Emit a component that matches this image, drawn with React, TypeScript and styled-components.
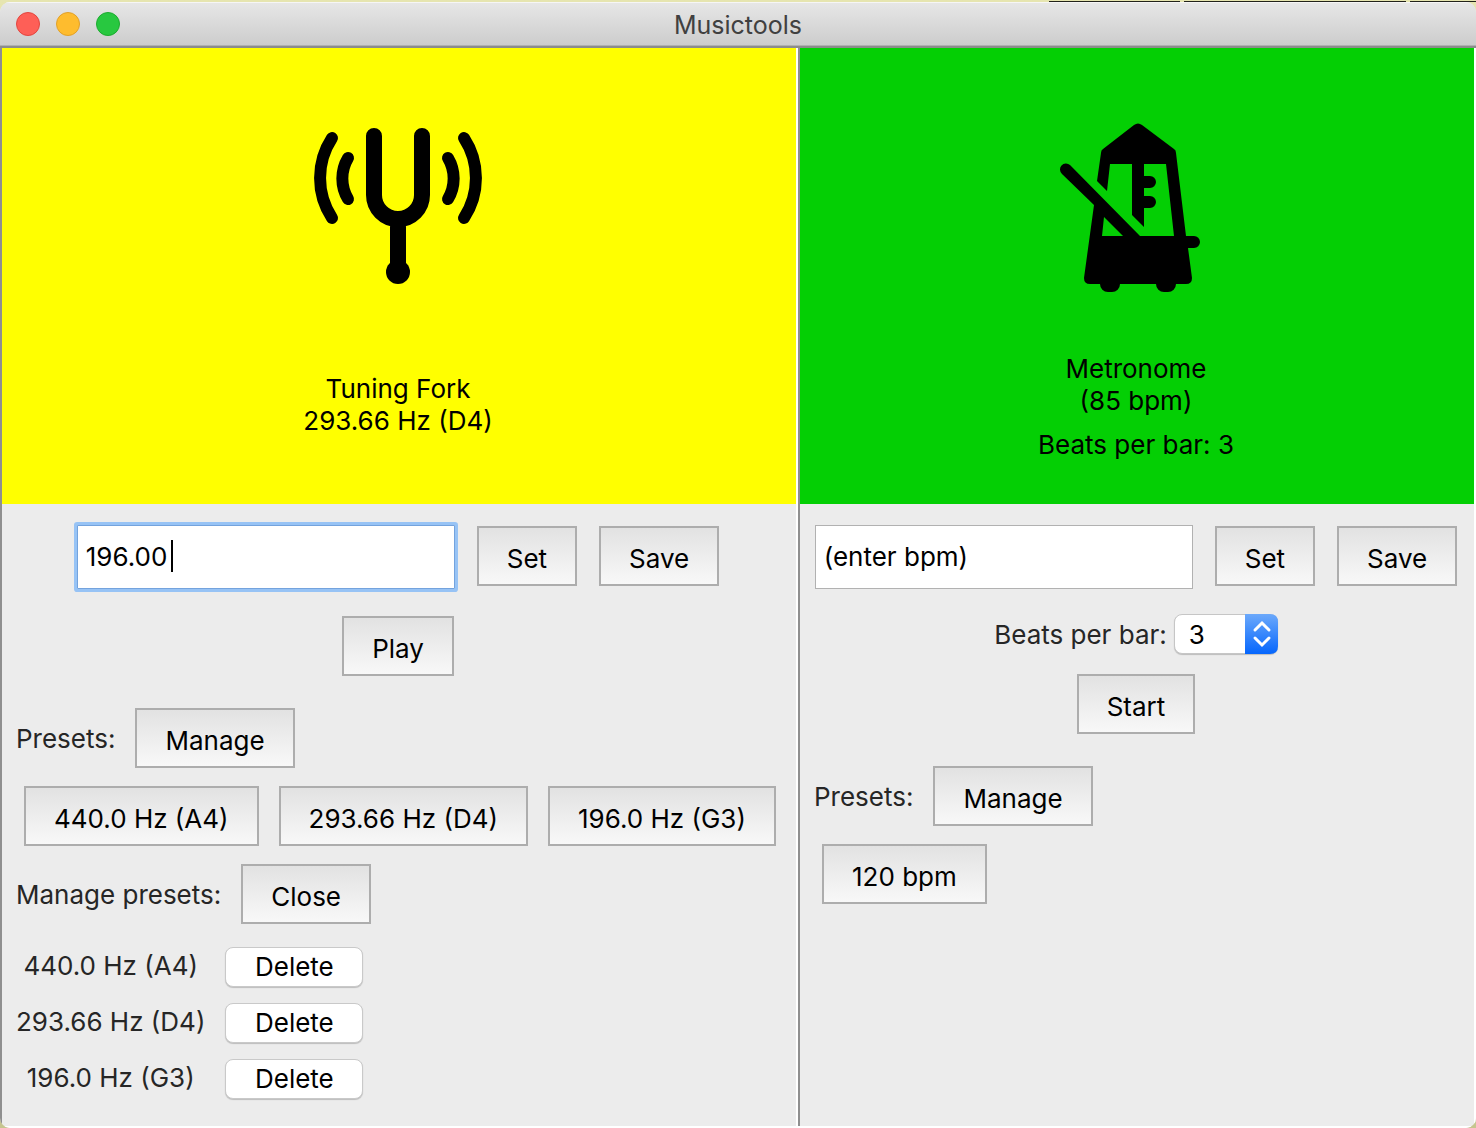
import React, { useState } from "react";
import styled, { createGlobalStyle } from "styled-components";

const GlobalStyle = createGlobalStyle`
  *, *::before, *::after { box-sizing: border-box; }
  body {
    margin: 0;
    background: linear-gradient(#e6e5b0, #c6c58f);
    color: #262626;
    font-family: Inter, "Liberation Sans", sans-serif;
    font-size: 26px;
    line-height: 32px;
  }
  button, input, select { font: inherit; color: #000; margin: 0; }
`;

const Desktop = styled.div`
  display: flex;
  flex-direction: column;
  min-height: 100vh;
`;

const DesktopEdge = styled.div`
  display: grid;
  grid-template-columns: 1044fr 131fr 222fr 66fr;
  column-gap: 4px;
  height: 2px;
  padding-top: 1px;
`;

const EdgeLine = styled.span<{ $dark?: boolean }>`
  background: ${(p) => (p.$dark ? "#22221a" : "transparent")};
`;

const AppWindow = styled.div`
  flex: 1;
  display: flex;
  flex-direction: column;
  border-radius: 10px;
  overflow: hidden;
  background: #ececec;
`;

const TitleBar = styled.header`
  display: grid;
  grid-template-columns: 1fr auto 1fr;
  align-items: center;
  height: 46px;
  padding: 0 16px;
  background: linear-gradient(#e7e7e7, #cccccc);
  border-bottom: 2px solid #8c8c8c;
  box-shadow: inset 0 1px #f6f6f6, inset 0 -1px #b0b0b0;
`;

const Lights = styled.div`
  display: flex;
  gap: 16px;
`;

const Light = styled.button<{ $fill: string; $edge: string }>`
  width: 24px;
  height: 24px;
  padding: 0;
  border: 1px solid ${(p) => p.$edge};
  border-radius: 50%;
  background: ${(p) => p.$fill};
`;

const Title = styled.h1`
  margin: 0;
  padding-top: 2px;
  font-size: 25px;
  font-weight: 400;
  color: #404040;
`;

const Panes = styled.main`
  flex: 1;
  display: grid;
  grid-template-columns: 798fr 678fr;
`;

const Pane = styled.section`
  display: flex;
  flex-direction: column;
  border: solid #fff;
  border-width: 0 2px 2px 0;
  box-shadow: inset 2px 0 #8f8f8f;
  padding-left: 2px;
`;

const Hero = styled.div<{ $color: string; $gap: number }>`
  display: flex;
  flex-direction: column;
  align-items: center;
  height: 456px;
  padding: 60px 2px 0 0;
  background: ${(p) => p.$color};
  color: #000;
  text-align: center;

  svg { margin-bottom: ${(p) => p.$gap}px; }
  p { margin: 0; }
  p + p { margin-top: 12px; }
`;

const Controls = styled.div`
  display: flex;
  flex-direction: column;
  padding: 21px 16px 21px 14px;
`;

const Field = styled.div`
  position: relative;
  display: flex;
`;

const TextInput = styled.input`
  width: 378px;
  height: 64px;
  padding: 0 8px 2px;
  border: 1px solid #b1b1b1;
  border-radius: 0;
  background: #fff;
  outline: none;
  caret-color: transparent;

  &:focus {
    border-color: #74a3dd;
    box-shadow: 0 0 0 3px #97c3f5;
    border-radius: 1px;
  }
`;

const Caret = styled.span`
  position: absolute;
  left: 94px;
  top: 15px;
  width: 2px;
  height: 32px;
  background: #000;
`;

const ToolButton = styled.button`
  height: 60px;
  padding: 6px 28px 0;
  border: 2px solid #adadad;
  background: linear-gradient(#e2e2e2, #f8f8f8);
  white-space: nowrap;
`;

const EntryRow = styled.form`
  display: flex;
  justify-content: center;
  align-items: center;
  gap: 22px;

  ${ToolButton} { margin-bottom: 2px; }
`;

const ActionRow = styled.div<{ $top: number }>`
  display: flex;
  justify-content: center;
  margin: ${(p) => p.$top}px 0 32px;
`;

const BeatsRow = styled.div`
  display: flex;
  justify-content: center;
  align-items: center;
  gap: 7px;
  margin-top: 25px;

  label { padding-top: 2px; }
`;

const SelectBox = styled.div`
  position: relative;
  display: flex;

  svg {
    position: absolute;
    top: 0;
    right: 0;
    pointer-events: none;
  }
`;

const Select = styled.select`
  appearance: none;
  width: 104px;
  height: 40px;
  padding: 2px 14px 0;
  border: 1px solid #c6c6c6;
  border-radius: 8px;
  background: #fff;
  box-shadow: 0 1px 1px #0003;
`;

const HeadingRow = styled.div`
  display: flex;
  align-items: center;
  gap: 20px;

  span { padding-top: 2px; }
`;

const PresetRow = styled.div`
  display: flex;
  gap: 20px;
  margin: 18px 0;
  padding-left: 8px;
`;

const PresetTable = styled.div`
  display: grid;
  grid-template-columns: max-content max-content;
  justify-items: center;
  align-items: center;
  gap: 16px 20px;
  margin-top: 23px;
`;

const PresetName = styled.span`
  padding-bottom: 3px;
`;

const DeleteButton = styled.button`
  width: 138px;
  height: 40px;
  padding: 0;
  border: 1px solid #c9c9c9;
  border-radius: 8px;
  background: #fff;
  box-shadow: 0 1px 1px #0003;
`;

const ForkIcon = () => (
  <svg width="200" height="200" viewBox="0 0 200 200" fill="none" stroke="#000" strokeLinecap="round" aria-hidden="true">
    <path strokeWidth="16" d="M76 28V87A24 24 0 0 0 124 87V28M100 112V160" />
    <circle cx="100" cy="164" r="12" fill="#000" stroke="none" />
    <path strokeWidth="12" d="M34 30A73 73 0 0 0 34 110M50 50A40 40 0 0 0 50 91M166 30A73 73 0 0 1 166 110M150 50A40 40 0 0 1 150 91" />
  </svg>
);

const MetronomeIcon = () => (
  <svg width="200" height="200" viewBox="-1 0 200 200" aria-hidden="true">
    <path
      fillRule="evenodd"
      d="M97 17Q101 14 105 17L137 41Q139 42 139 45L149 128H157A6 6 0 0 1 157 140H151L155 170Q155 176 149 176H139A8 8 0 0 1 131 184H127A8 8 0 0 1 119 176H83A8 8 0 0 1 75 184H71A8 8 0 0 1 63 176H53Q47 176 47 170L57 97L25 66A6 6 0 0 1 33 57L103 128H137L129 56H107V68H113A6 6 0 0 1 113 80H107V88H113A6 6 0 0 1 113 100H107V119L95 107V56H73L70 83L60 73L64 45Q64 42 66 41ZM67 109L65 128H86Z"
    />
  </svg>
);

const Stepper = () => (
  <svg width="33" height="40" viewBox="0 0 33 40" fill="none" aria-hidden="true">
    <defs>
      <linearGradient id="stepper" x1="0" y1="0" x2="0" y2="1">
        <stop offset="0" stopColor="#6ca9fb" />
        <stop offset="1" stopColor="#0566fd" />
      </linearGradient>
    </defs>
    <path d="M0 0H25Q33 0 33 8V32Q33 40 25 40H0Z" fill="url(#stepper)" />
    <path d="M10 16L17 9L24 16M10 24L17 31L24 24" stroke="#fff" strokeWidth="3" strokeLinecap="round" />
  </svg>
);

const tones = ["440.0 Hz (A4)", "293.66 Hz (D4)", "196.0 Hz (G3)"];

export default function App() {
  const [frequency, setFrequency] = useState("196.00");
  const [bpm, setBpm] = useState("(enter bpm)");
  const [beats, setBeats] = useState("3");

  return (
    <>
      <GlobalStyle />
      <Desktop>
        <DesktopEdge>
          <EdgeLine />
          <EdgeLine $dark />
          <EdgeLine $dark />
          <EdgeLine $dark />
        </DesktopEdge>
        <AppWindow>
          <TitleBar>
            <Lights>
              <Light aria-label="Close window" $fill="#fe5f57" $edge="#e2463f" />
              <Light aria-label="Minimize window" $fill="#febc2e" $edge="#e1a029" />
              <Light aria-label="Zoom window" $fill="#28c840" $edge="#1dab2f" />
            </Lights>
            <Title>Musictools</Title>
          </TitleBar>
          <Panes>
            <Pane aria-label="Tuning fork">
              <Hero $color="#ffff00" $gap={65}>
                <ForkIcon />
                <p>Tuning Fork<br />293.66 Hz (D4)</p>
              </Hero>
              <Controls>
                <EntryRow onSubmit={(e) => e.preventDefault()}>
                  <Field>
                    <TextInput
                      aria-label="Frequency"
                      autoFocus
                      value={frequency}
                      onChange={(e) => setFrequency(e.target.value)}
                    />
                    <Caret />
                  </Field>
                  <ToolButton type="button">Set</ToolButton>
                  <ToolButton type="button">Save</ToolButton>
                </EntryRow>
                <ActionRow $top={27}>
                  <ToolButton>Play</ToolButton>
                </ActionRow>
                <HeadingRow>
                  <span>Presets:</span>
                  <ToolButton>Manage</ToolButton>
                </HeadingRow>
                <PresetRow>
                  {tones.map((tone) => <ToolButton key={tone}>{tone}</ToolButton>)}
                </PresetRow>
                <HeadingRow>
                  <span>Manage presets:</span>
                  <ToolButton>Close</ToolButton>
                </HeadingRow>
                <PresetTable>
                  {tones.map((tone) => (
                    <React.Fragment key={tone}>
                      <PresetName>{tone}</PresetName>
                      <DeleteButton>Delete</DeleteButton>
                    </React.Fragment>
                  ))}
                </PresetTable>
              </Controls>
            </Pane>
            <Pane aria-label="Metronome">
              <Hero $color="#04cf04" $gap={45}>
                <MetronomeIcon />
                <p>Metronome<br />(85 bpm)</p>
                <p>Beats per bar: 3</p>
              </Hero>
              <Controls>
                <EntryRow onSubmit={(e) => e.preventDefault()}>
                  <TextInput aria-label="Tempo" value={bpm} onChange={(e) => setBpm(e.target.value)} />
                  <ToolButton type="button">Set</ToolButton>
                  <ToolButton type="button">Save</ToolButton>
                </EntryRow>
                <BeatsRow>
                  <label htmlFor="beats">Beats per bar:</label>
                  <SelectBox>
                    <Select id="beats" value={beats} onChange={(e) => setBeats(e.target.value)}>
                      <option>2</option>
                      <option>3</option>
                      <option>4</option>
                    </Select>
                    <Stepper />
                  </SelectBox>
                </BeatsRow>
                <ActionRow $top={20}>
                  <ToolButton>Start</ToolButton>
                </ActionRow>
                <HeadingRow>
                  <span>Presets:</span>
                  <ToolButton>Manage</ToolButton>
                </HeadingRow>
                <PresetRow>
                  <ToolButton>120 bpm</ToolButton>
                </PresetRow>
              </Controls>
            </Pane>
          </Panes>
        </AppWindow>
      </Desktop>
    </>
  );
}
